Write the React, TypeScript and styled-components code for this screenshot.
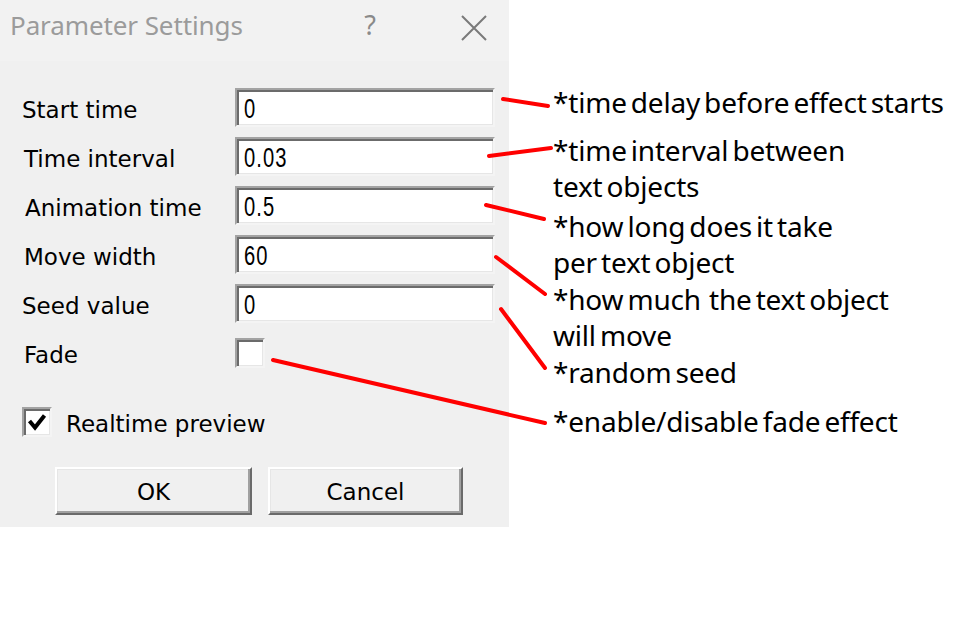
import React from "react";
import styled, { createGlobalStyle } from "styled-components";

const Global = createGlobalStyle`
  html, body { margin: 0; padding: 0; background: #ffffff; }
  body { width: 958px; height: 628px; overflow: hidden; }
`;

const Page = styled.div`
  position: relative;
  width: 958px;
  height: 628px;
  display: flex;
  align-items: flex-start;
  gap: 44px;
  background: #ffffff;
`;

const Dialog = styled.div`
  width: 509px;
  height: 527px;
  background: #f0f0f0;
  display: flex;
  flex-direction: column;
  font-family: "DejaVu Sans", sans-serif;
  color: #000;
`;

const TitleBar = styled.div`
  height: 62px;
  background: #f2f2f2;
  display: flex;
  align-items: center;
  padding: 0 0 12px 10px;
  box-sizing: border-box;
`;

const Title = styled.div`
  flex: 1;
  font-family: "Noto Sans", sans-serif;
  font-size: 26px;
  color: #9b9b9b;
  letter-spacing: -0.1px;
`;

const Help = styled.div`
  width: 30px;
  margin-right: 76px;
  font-family: "Noto Sans", sans-serif;
  font-size: 27px;
  color: #8a8a8a;
  text-align: center;
`;

const CloseBox = styled.div`
  width: 26px;
  height: 26px;
  margin-right: 22px;
  margin-top: 6px;
  display: flex;
`;

const Body = styled.div`
  flex: 1;
  display: flex;
  flex-direction: column;
  padding: 27px 0 12px 22px;
`;

const Form = styled.div`
  display: grid;
  grid-template-columns: 213px 260px;
  grid-auto-rows: 39px;
  row-gap: 10px;
  align-items: center;
`;

const Label = styled.div<{ $dx?: number }>`
  font-size: 23px;
  padding-left: ${(p) => p.$dx ?? 0}px;
  line-height: 1;
  padding-top: 5px;
`;

const Field = styled.div`
  height: 39px;
  box-sizing: border-box;
  background: #ffffff;
  border-style: solid;
  border-width: 2px;
  border-color: #a3a3a3 #f4f4f4 #f4f4f4 #a3a3a3;
  box-shadow: inset 2px 2px 0 #6b6b6b, inset -1px -1px 0 #e6e6e6;
  display: flex;
  align-items: center;
  padding-left: 7px;
  overflow: hidden;
`;

const Digits = styled.span`
  display: inline-block;
  font-family: "Liberation Sans", sans-serif;
  font-size: 28px;
  transform: scaleX(0.72);
  transform-origin: left center;
  letter-spacing: 1.5px;
  padding-top: 2px;
`;

const Check = styled.div`
  width: 30px;
  height: 30px;
  box-sizing: border-box;
  background: #ffffff;
  border-style: solid;
  border-width: 2px;
  border-color: #a3a3a3 #f4f4f4 #f4f4f4 #a3a3a3;
  box-shadow: inset 2px 2px 0 #6b6b6b, inset -1px -1px 0 #e6e6e6;
  display: flex;
  align-items: center;
  justify-content: center;
`;

const PreviewRow = styled.div`
  margin-top: 35px;
  display: flex;
  align-items: center;
  gap: 14px;
  height: 30px;
`;

const Buttons = styled.div`
  margin-top: 30px;
  margin-left: 33px;
  display: flex;
  gap: 16px;
`;

const Button = styled.div<{ $w: number }>`
  width: ${(p) => p.$w}px;
  height: 48px;
  box-sizing: border-box;
  background: #f0f0f0;
  border-style: solid;
  border-width: 2px;
  border-color: #ffffff #6a6a6a #6a6a6a #ffffff;
  box-shadow: inset -2px -2px 0 #a0a0a0, inset 1px 1px 0 #e6e6e6;
  display: flex;
  align-items: center;
  justify-content: center;
  font-size: 23px;
  padding-top: 1px;
`;

const Notes = styled.div`
  padding-top: 84px;
  display: flex;
  flex-direction: column;
  font-family: "Noto Sans", sans-serif;
  font-size: 28px;
  letter-spacing: -0.2px;
  word-spacing: -3px;
  color: #000;
`;

const Note = styled.div<{ $gap: number }>`
  margin-top: ${(p) => p.$gap}px;
  line-height: 36px;
  white-space: pre;
`;

const Overlay = styled.svg`
  position: absolute;
  left: 0;
  top: 0;
  pointer-events: none;
`;

const fields = [
  { label: "Start time", value: "0", dx: 0 },
  { label: "Time interval", value: "0.03", dx: 2 },
  { label: "Animation time", value: "0.5", dx: 3 },
  { label: "Move width", value: "60", dx: 2 },
  { label: "Seed value", value: "0", dx: 0 },
];

const notes = [
  { gap: 0, text: "*time delay before effect starts" },
  { gap: 12, text: "*time interval between\ntext objects" },
  { gap: 4, text: "*how long does it take\nper text object" },
  { gap: 1, text: "*how much  the text object\nwill move" },
  { gap: 1, text: "*random seed" },
  { gap: 13, text: "*enable/disable fade effect" },
];

const lines = [
  [503, 99, 548, 106],
  [489, 156, 551, 148],
  [486, 205, 544, 219],
  [496, 257, 545, 294],
  [501, 309, 545, 368],
  [273, 360, 545, 423],
];

export default function App() {
  return (
    <Page>
      <Global />
      <Dialog>
        <TitleBar>
          <Title>Parameter Settings</Title>
          <Help>?</Help>
          <CloseBox>
            <svg width="26" height="26" viewBox="0 0 26 26">
              <path d="M1 1 L25 25 M25 1 L1 25" stroke="#7a7a7a" strokeWidth="2" fill="none" />
            </svg>
          </CloseBox>
        </TitleBar>
        <Body>
          <Form>
            {fields.map((f) => (
              <React.Fragment key={f.label}>
                <Label $dx={f.dx}>{f.label}</Label>
                <Field>
                  <Digits>{f.value}</Digits>
                </Field>
              </React.Fragment>
            ))}
            <Label $dx={2}>Fade</Label>
            <Check />
          </Form>
          <PreviewRow>
            <Check>
              <svg width="20" height="18" viewBox="0 0 20 18">
                <path d="M2.5 8 L8 14.5 L17.5 2.5" stroke="#000" strokeWidth="4" fill="none" />
              </svg>
            </Check>
            <Label>Realtime preview</Label>
          </PreviewRow>
          <Buttons>
            <Button $w={197}>OK</Button>
            <Button $w={195}>Cancel</Button>
          </Buttons>
        </Body>
      </Dialog>
      <Notes>
        {notes.map((n, i) => (
          <Note key={i} $gap={n.gap}>
            {n.text}
          </Note>
        ))}
      </Notes>
      <Overlay width="958" height="628" viewBox="0 0 958 628">
        {lines.map(([x1, y1, x2, y2], i) => (
          <line key={i} x1={x1} y1={y1} x2={x2} y2={y2} stroke="#ff0000" strokeWidth="4" strokeLinecap="round" />
        ))}
      </Overlay>
    </Page>
  );
}
